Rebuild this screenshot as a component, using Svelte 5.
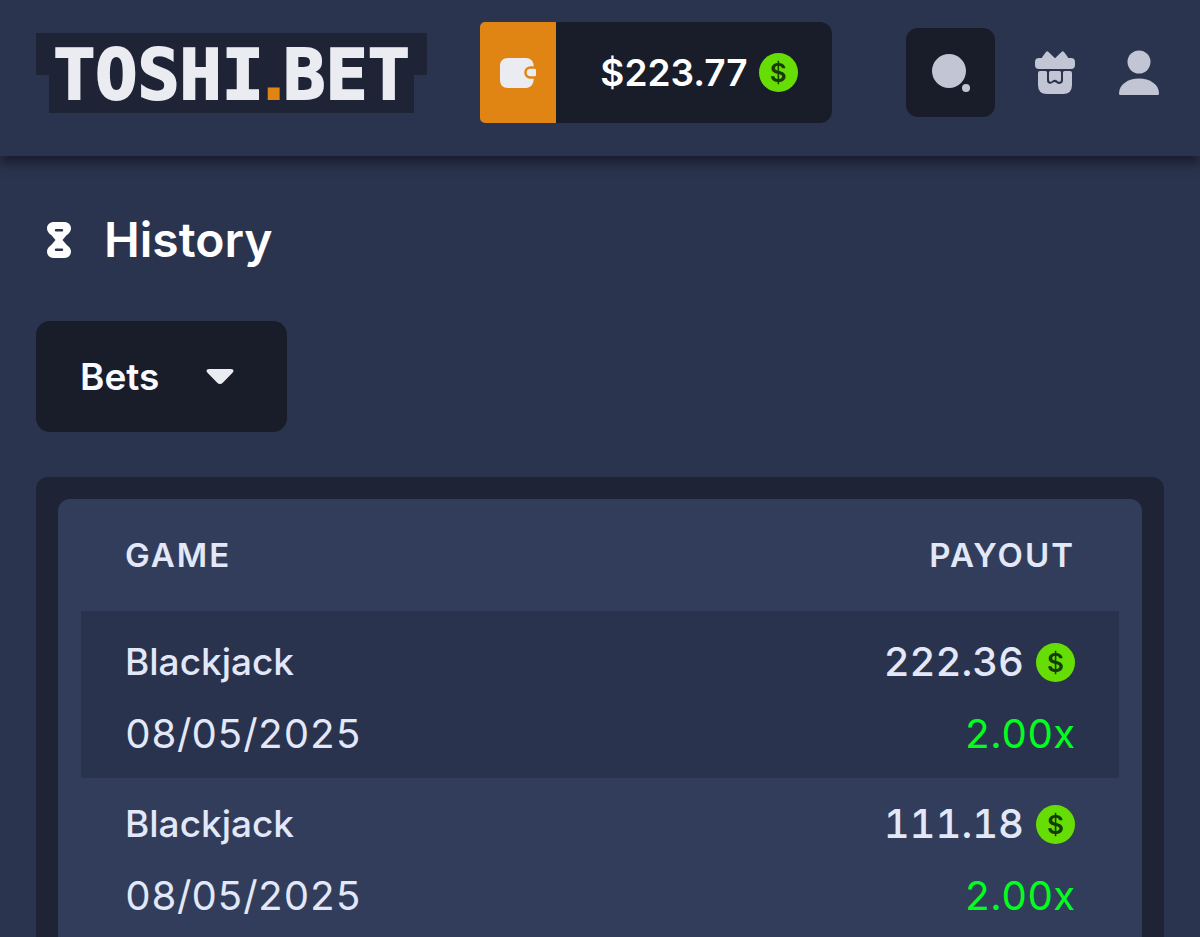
<script>
  let category = $state('Bets');
  const bets = [
    { game: 'Blackjack', date: '08/05/2025', payout: '222.36', multiplier: '2.00x' },
    { game: 'Blackjack', date: '08/05/2025', payout: '111.18', multiplier: '2.00x' }
  ];
</script>

{#snippet coin()}
  <span class="coin">$</span>
{/snippet}

<header>
  <a class="logo" href="/">TOSHI<span class="dot">.</span>BET</a>

  <div class="balance">
    <button class="wallet" aria-label="Wallet">
      <svg width="36" height="30" viewBox="0 0 36 30" aria-hidden="true">
        <path fill="#ebecf1" d="M8 0h18c4.500 0 7.500 3 7.800 8.200H30.500a6.300 6.300 0 0 0 0 12.600h3.300C33.500 26.500 30.500 30 26 30H8c-5 0-8-3-8-8V8c0-5 3-8 8-8z" />
        <path fill="#ebecf1" d="M30.500 10.700H34.500c1 0 1.500.5 1.500 1.500v4.600c0 1-.5 1.500-1.500 1.500h-4a3.800 3.800 0 0 1 0-7.600z" />
      </svg>
    </button>
    <div class="amount">$223.77 {@render coin()}</div>
  </div>

  <nav>
    <button class="search" aria-label="Search">
      <svg width="38" height="38" viewBox="0 0 38 38" fill="#c1c5d4" aria-hidden="true">
        <circle cx="17" cy="17" r="17" />
        <circle cx="34" cy="34" r="4" />
      </svg>
    </button>
    <button aria-label="Rewards">
      <svg width="40" height="44" viewBox="0 0 40 44" fill="#c1c5d4" aria-hidden="true">
        <path d="M7 7q0-1 1-2l3-4q1.200-1.500 2.500 0L20 7.200 26.500 1q1.300-1.500 2.500 0l3 4q1 1 1 2z" />
        <rect y="7" width="40" height="11" rx="4" />
        <path d="M5 20h5.500q1.500 0 1.500 1.500V29q0 4 3.500 3.700 1.500-.2 2.500-1.200 1.500-1.300 3.300.2 1.500 1.300 3.200 1.200 3.500-.1 3.500-3.900V21.500Q28 20 29.500 20H35q2 0 2 2v12q0 9-9 9H12q-9 0-9-9V22q0-2 2-2z" />
        <path d="M14 21.500Q14 20 15.500 20h9q1.500 0 1.500 1.500v7q0 2.500-1.500 2.300-1 0-2-.9-2.800-2.200-5.300 0-1 .9-1.900.9Q14 30.800 14 28.500z" />
      </svg>
    </button>
    <button aria-label="Profile">
      <svg width="40" height="46" viewBox="0 0 40 46" fill="#c1c5d4" aria-hidden="true">
        <circle cx="20" cy="12" r="11.500" />
        <path d="M0 43.500C0 34.500 9 28.500 20 28.500s20 6 20 15q0 1.500-1.500 1.500h-37Q0 45 0 43.500z" />
      </svg>
    </button>
  </nav>
</header>

<main>
  <h1>
    <svg width="24" height="36" viewBox="0 0 24 36" aria-hidden="true">
      <path fill="#fff" fill-rule="evenodd" d="M7 0h10c4 0 7 2.500 7 6.500 0 3-2 5-4.500 6.800L15.500 18l4 4.700C22 24.500 24 26.500 24 29.500c0 4-3 6.500-7 6.500H7c-4 0-7-2.500-7-6.500 0-3 2-5 4.500-6.800L8.500 18l-4-4.700C2 11.500 0 9.500 0 6.500 0 2.500 3 0 7 0zM9 7a1 1 0 0 0 0 2.500h6A1 1 0 0 0 15 7zM9 26.500A1 1 0 0 0 9 29h6a1 1 0 0 0 0-2.500z" />
    </svg>
    History
  </h1>

  <div class="picker">
    <select aria-label="History type" bind:value={category}>
      <option>Bets</option>
    </select>
    <svg width="28" height="16" viewBox="0 0 28 16" aria-hidden="true">
      <path fill="#ebecf1" d="M3 0h22q2.500 0 2.500 1.800 0 1-1 2L17 13.500q-3 3-6 0L1.500 3.800q-1-1-1-2Q.5 0 3 0z" />
    </svg>
  </div>

  <section>
    <div class="sheet">
      <table>
        <thead>
          <tr><th>GAME</th><th>PAYOUT</th></tr>
        </thead>
        <tbody>
          {#each bets as bet}
            <tr>
              <td>
                <div class="game">{bet.game}</div>
                <div>{bet.date}</div>
              </td>
              <td>
                <div class="payout">{bet.payout} {@render coin()}</div>
                <div class="multiplier">{bet.multiplier}</div>
              </td>
            </tr>
          {/each}
        </tbody>
      </table>
    </div>
  </section>
</main>

<style>
  :global(body) {
    margin: 0;
    background: #2b344e;
    font-family: Inter, "Liberation Sans", sans-serif;
    color: #e2e8f8;
  }
  button {
    width: 48px;
    border: 0;
    padding: 0;
    background: none;
    cursor: pointer;
    display: flex;
    align-items: center;
    justify-content: center;
  }
  svg { display: block; flex: none; }
  header {
    height: 156px;
    box-sizing: border-box;
    display: flex;
    align-items: flex-start;
    padding: 22px 37px 0 36px;
    box-shadow: 0 8px 10px 0 #1b1e31;
  }
  .logo {
    box-sizing: border-box;
    width: 391px;
    height: 80px;
    margin-top: 11px;
    background: #1e2335;
    clip-path: polygon(0 0, 100% 0, 100% 42px, 378px 42px, 378px 100%, 13px 100%, 13px 42px, 0 42px);
    display: flex;
    justify-content: center;
    font: bold 70px/84px "DejaVu Sans Mono", monospace;
    -webkit-text-stroke: 2px currentColor;
    color: #ebecf1;
    text-decoration: none;
  }
  .dot {
    font-family: "Liberation Sans", sans-serif;
    color: #e08414;
  }
  .balance {
    display: flex;
    width: 352px;
    height: 101px;
    margin-left: 53px;
    border-radius: 12px;
    background: #181d29;
  }
  .wallet {
    width: 76px;
    background: #e08414;
    border-radius: 5px 0 0 5px;
  }
  .amount {
    flex: 1;
    display: flex;
    align-items: center;
    justify-content: center;
    gap: 11px;
    padding-left: 10px;
    font-size: 37px;
    font-weight: 600;
    color: #fff;
  }
  .coin {
    flex: none;
    width: 39px;
    height: 39px;
    border-radius: 50%;
    background: #66dd05;
    color: #173a08;
    font: 600 26px/39px Inter, sans-serif;
    text-align: center;
  }
  nav {
    display: flex;
    align-items: center;
    gap: 36px;
    margin: 6px 0 0 auto;
  }
  .search {
    width: 89px;
    height: 89px;
    border-radius: 12px;
    background: #181d29;
  }
  main { padding: 54px 36px 0; }
  h1 {
    display: flex;
    align-items: center;
    gap: 33px;
    margin: 0 0 51px;
    padding-left: 11px;
    font-size: 48px;
    line-height: 60px;
    font-weight: 600;
    color: #fff;
  }
  .picker {
    display: grid;
    align-items: center;
    width: 251px;
    margin-bottom: 45px;
  }
  .picker > * { grid-area: 1 / 1; }
  .picker svg {
    justify-self: end;
    margin-right: 53px;
    pointer-events: none;
  }
  select {
    appearance: none;
    width: 100%;
    height: 111px;
    padding: 0 44px;
    border: 0;
    border-radius: 14px;
    background: #181d29;
    color: #f8faff;
    font: 600 37px/48px Inter, sans-serif;
  }
  section {
    padding: 22px 22px 0;
    border-radius: 12px;
    background: #1e2335;
  }
  .sheet {
    padding: 0 23px 22px;
    border-radius: 12px;
    background: #323d5b;
  }
  table {
    width: 100%;
    border-collapse: collapse;
  }
  th {
    height: 112px;
    padding: 0 44px;
    text-align: left;
    font-size: 33px;
    font-weight: 600;
    letter-spacing: 2px;
  }
  td {
    padding: 10px 44px 8px;
    font-size: 40px;
    line-height: 72px;
    font-variant-numeric: tabular-nums;
  }
  tbody tr:nth-child(odd) { background: #2a334e; }
  tbody tr:nth-child(odd) td { padding-top: 15px; }
  th:last-child, td:last-child { text-align: right; }
  .game {
    font-size: 37px;
    font-weight: 500;
  }
  .payout {
    display: flex;
    align-items: center;
    justify-content: flex-end;
    gap: 12px;
    font-weight: 500;
  }
  .multiplier { color: #00ff1f; }
</style>
